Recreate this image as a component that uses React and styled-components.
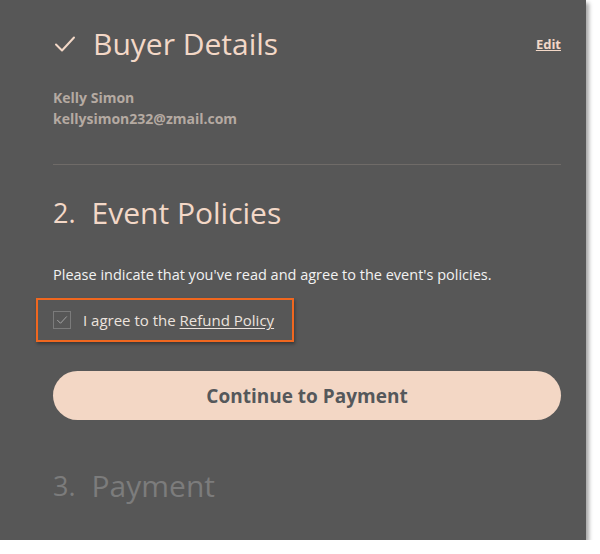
import React from "react"
import styled, { createGlobalStyle } from "styled-components"

const GlobalStyle = createGlobalStyle`
  body {
    margin: 0;
    background: #ffffff;
    font-family: "Open Sans", "Lato", sans-serif;
  }
`

const Panel = styled.div`
  width: 586px;
  height: 540px;
  box-sizing: border-box;
  padding: 26px 25px 0 53px;
  background: #575757;
  box-shadow: 3px 3px 4px rgba(0, 0, 0, 0.35);
  overflow: hidden;
`

const SectionHead = styled.div`
  display: flex;
  align-items: center;
  justify-content: space-between;
`

const Title = styled.h2`
  display: flex;
  align-items: center;
  gap: 16px;
  margin: 0;
  font-size: 30px;
  line-height: 36px;
  font-weight: 500;
  color: ${props => (props.$muted ? "#7c7c7c" : "#f3d8c7")};
`

const Step = styled.span`
  font-size: 27px;
`

const EditLink = styled.a`
  font-size: 13px;
  font-weight: 700;
  color: #f3d8c7;
  text-decoration: underline;
  cursor: pointer;
`

const Buyer = styled.div`
  margin-top: 25px;
  font-size: 14px;
  line-height: 21px;
  font-weight: 700;
  color: #b5aaa2;
`

const Divider = styled.hr`
  margin: 35px 0 30px;
  border: 0;
  border-top: 1px solid #6f6b68;
`

const Intro = styled.p`
  margin: 34px 0 0;
  font-size: 14.5px;
  line-height: 20px;
  color: #f2f2f2;
`

const AgreeBox = styled.label`
  display: flex;
  align-items: center;
  gap: 12px;
  width: 225px;
  margin: 13px 0 0 -17px;
  padding: 10px 14px 10px 15px;
  border: 2.5px solid #f0671f;
  box-shadow: 1px 2px 3px rgba(0, 0, 0, 0.35);
  font-size: 15px;
  font-weight: 500;
  color: #ece3de;
  cursor: pointer;
`

const CheckSquare = styled.span`
  display: flex;
  align-items: center;
  justify-content: center;
  width: 16px;
  height: 16px;
  border: 1px solid #7b7b7b;
`

const PolicyLink = styled.span`
  text-decoration: underline;
  text-underline-offset: 2px;
`

const ContinueButton = styled.button`
  display: block;
  width: 100%;
  height: 49px;
  margin-top: 29px;
  border: 0;
  border-radius: 25px;
  background: #f3d7c5;
  font-family: inherit;
  font-size: 19px;
  font-weight: 700;
  color: #55585b;
  cursor: pointer;
`

const Upcoming = styled.div`
  margin-top: 48px;
`

const Check = ({ size, stroke, color }) => (
  <svg width={size} height={size} viewBox="0 0 24 24" fill="none">
    <polyline
      points="3,12.5 9,18.5 21,5.5"
      stroke={color}
      strokeWidth={stroke}
      strokeLinecap="round"
      strokeLinejoin="round"
    />
  </svg>
)

export default function App() {
  return (
    <>
      <GlobalStyle />
      <Panel>
        <SectionHead>
          <Title>
            <Check size={24} stroke={2} color="#f3d8c7" />
            Buyer Details
          </Title>
          <EditLink>Edit</EditLink>
        </SectionHead>
        <Buyer>
          Kelly Simon
          <br />
          kellysimon232@zmail.com
        </Buyer>
        <Divider />
        <Title>
          <Step>2.</Step>
          Event Policies
        </Title>
        <Intro>Please indicate that you've read and agree to the event's policies.</Intro>
        <AgreeBox>
          <CheckSquare>
            <Check size={12} stroke={1.6} color="#b5b5b5" />
          </CheckSquare>
          <span>
            I agree to the <PolicyLink>Refund Policy</PolicyLink>
          </span>
        </AgreeBox>
        <ContinueButton>Continue to Payment</ContinueButton>
        <Upcoming>
          <Title $muted>
            <Step>3.</Step>
            Payment
          </Title>
        </Upcoming>
      </Panel>
    </>
  )
}
